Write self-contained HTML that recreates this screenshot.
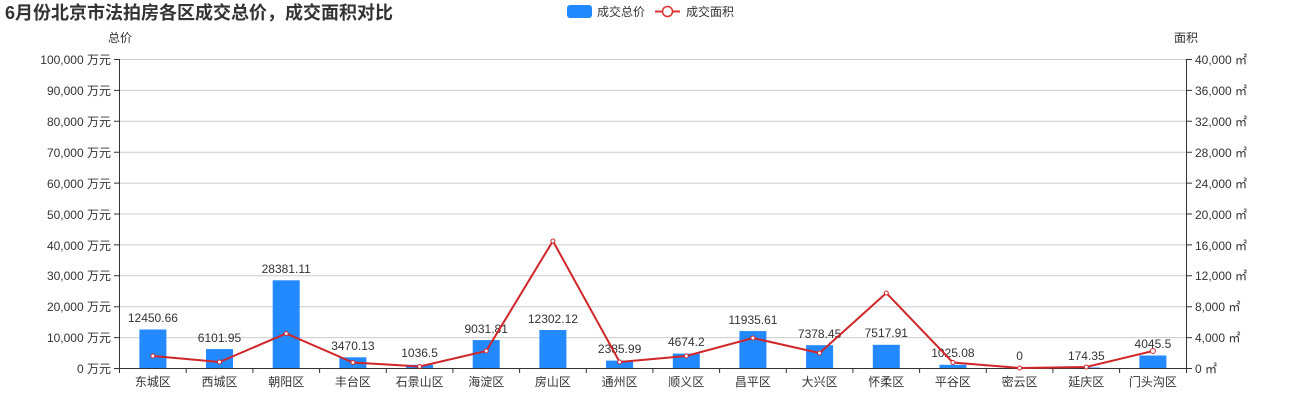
<!DOCTYPE html>
<html><head><meta charset="utf-8"><style>
html,body{margin:0;padding:0;background:#fff;width:1300px;height:400px;overflow:hidden}
svg{display:block;font-family:"Liberation Sans","Noto Sans CJK SC",sans-serif}
</style></head><body>
<svg width="1300" height="400" viewBox="0 0 1300 400">
<text x="5" y="19" font-size="18" font-weight="bold" fill="#333">6月份北京市法拍房各区成交总价，成交面积对比</text>
<!-- legend -->
<rect x="567" y="5" width="25" height="13" rx="3" fill="#2289ff"/>
<text x="597" y="16" font-size="12" fill="#333">成交总价</text>
<line x1="655" y1="11.5" x2="680" y2="11.5" stroke="#d33" stroke-width="2"/>
<circle cx="667.5" cy="11.5" r="5" fill="#fff" stroke="#d33" stroke-width="1.5"/>
<text x="686" y="16" font-size="12" fill="#333">成交面积</text>
<text x="108" y="42" font-size="12" fill="#333">总价</text>
<text x="1174" y="42" font-size="12" fill="#333">面积</text>
<g stroke="#ccc" stroke-width="1">
<line x1="119" x2="1186" y1="59.5" y2="59.5"/>
<line x1="119" x2="1186" y1="90.4" y2="90.4"/>
<line x1="119" x2="1186" y1="121.3" y2="121.3"/>
<line x1="119" x2="1186" y1="152.2" y2="152.2"/>
<line x1="119" x2="1186" y1="183.1" y2="183.1"/>
<line x1="119" x2="1186" y1="214" y2="214"/>
<line x1="119" x2="1186" y1="244.9" y2="244.9"/>
<line x1="119" x2="1186" y1="275.8" y2="275.8"/>
<line x1="119" x2="1186" y1="306.7" y2="306.7"/>
<line x1="119" x2="1186" y1="337.6" y2="337.6"/>
</g>
<g stroke="#333" stroke-width="1">
<line x1="119.5" y1="59" x2="119.5" y2="368"/>
<line x1="1186.5" y1="59" x2="1186.5" y2="368"/>
<line x1="119" y1="368.5" x2="1187" y2="368.5"/>
</g>
<g stroke="#333" stroke-width="1">
<path d="M114 59.5h5M114 90.4h5M114 121.3h5M114 152.2h5M114 183.1h5M114 214h5M114 244.9h5M114 275.8h5M114 306.7h5M114 337.6h5M114 368.5h5"/>
<path d="M1187 59.5h5M1187 90.4h5M1187 121.3h5M1187 152.2h5M1187 183.1h5M1187 214h5M1187 244.9h5M1187 275.8h5M1187 306.7h5M1187 337.6h5M1187 368.5h5"/>
<path d="M119.5 368v5M186.2 368v5M252.9 368v5M319.6 368v5M386.3 368v5M452.9 368v5M519.6 368v5M586.3 368v5M652.9 368v5M719.6 368v5M786.3 368v5M852.9 368v5M919.6 368v5M986.3 368v5M1052.9 368v5M1119.6 368v5M1186.5 368v5"/>
</g>
<g font-size="12" fill="#333" text-anchor="end">
<text x="111" y="64">100,000 万元</text>
<text x="111" y="95">90,000 万元</text>
<text x="111" y="126">80,000 万元</text>
<text x="111" y="157">70,000 万元</text>
<text x="111" y="188">60,000 万元</text>
<text x="111" y="219">50,000 万元</text>
<text x="111" y="250">40,000 万元</text>
<text x="111" y="280">30,000 万元</text>
<text x="111" y="311">20,000 万元</text>
<text x="111" y="342">10,000 万元</text>
<text x="111" y="373">0 万元</text>
</g>
<g font-size="12" fill="#333">
<text x="1195" y="64">40,000 ㎡</text>
<text x="1195" y="95">36,000 ㎡</text>
<text x="1195" y="126">32,000 ㎡</text>
<text x="1195" y="157">28,000 ㎡</text>
<text x="1195" y="188">24,000 ㎡</text>
<text x="1195" y="219">20,000 ㎡</text>
<text x="1195" y="250">16,000 ㎡</text>
<text x="1195" y="280">12,000 ㎡</text>
<text x="1195" y="311">8,000 ㎡</text>
<text x="1195" y="342">4,000 ㎡</text>
<text x="1195" y="373">0 ㎡</text>
</g>
<g fill="#2289ff">
<rect x="139.4" y="329.5" width="27" height="38.5"/>
<rect x="206" y="349.1" width="27" height="18.9"/>
<rect x="272.7" y="280.3" width="27" height="87.7"/>
<rect x="339.4" y="357.3" width="27" height="10.7"/>
<rect x="406.1" y="364.8" width="27" height="3.2"/>
<rect x="472.7" y="340.1" width="27" height="27.9"/>
<rect x="539.4" y="330" width="27" height="38"/>
<rect x="606.1" y="360.6" width="27" height="7.4"/>
<rect x="672.8" y="353.6" width="27" height="14.4"/>
<rect x="739.4" y="331.1" width="27" height="36.9"/>
<rect x="806.1" y="345.2" width="27" height="22.8"/>
<rect x="872.8" y="344.8" width="27" height="23.2"/>
<rect x="939.4" y="364.8" width="27" height="3.2"/>
<rect x="1072.8" y="367.5" width="27" height="0.5"/>
<rect x="1139.4" y="355.5" width="27" height="12.5"/>
</g>
<g font-size="12" fill="#333" text-anchor="middle">
<text x="152.9" y="322">12450.66</text>
<text x="219.5" y="342">6101.95</text>
<text x="286.2" y="273">28381.11</text>
<text x="352.9" y="350">3470.13</text>
<text x="419.6" y="357">1036.5</text>
<text x="486.2" y="333">9031.81</text>
<text x="552.9" y="323">12302.12</text>
<text x="619.6" y="353">2385.99</text>
<text x="686.3" y="346">4674.2</text>
<text x="752.9" y="324">11935.61</text>
<text x="819.6" y="338">7378.45</text>
<text x="886.3" y="337">7517.91</text>
<text x="952.9" y="357">1025.08</text>
<text x="1019.6" y="360">0</text>
<text x="1086.3" y="360">174.35</text>
<text x="1152.9" y="348">4045.5</text>
</g>
<polyline fill="none" stroke="#d0262a" stroke-width="2" points="152.9,356 219.5,362 286.2,333.5 352.9,362.5 419.6,366.5 486.2,351 552.9,241 619.6,362 686.3,356 752.9,338 819.6,353 886.3,293 952.9,362.5 1019.6,368 1086.3,367 1152.9,351"/>
<g fill="#fff" stroke="#d0262a" stroke-width="1">
<circle cx="152.9" cy="356" r="2"/><circle cx="219.5" cy="362" r="2"/><circle cx="286.2" cy="333.5" r="2"/><circle cx="352.9" cy="362.5" r="2"/><circle cx="419.6" cy="366.5" r="2"/><circle cx="486.2" cy="351" r="2"/><circle cx="552.9" cy="241" r="2"/><circle cx="619.6" cy="362" r="2"/><circle cx="686.3" cy="356" r="2"/><circle cx="752.9" cy="338" r="2"/><circle cx="819.6" cy="353" r="2"/><circle cx="886.3" cy="293" r="2"/><circle cx="952.9" cy="362.5" r="2"/><circle cx="1019.6" cy="368" r="2"/><circle cx="1086.3" cy="367" r="2"/><circle cx="1152.9" cy="351" r="2.5"/>
</g>
<g font-size="12" fill="#333" text-anchor="middle">
<text x="152.9" y="386">东城区</text><text x="219.5" y="386">西城区</text><text x="286.2" y="386">朝阳区</text><text x="352.9" y="386">丰台区</text><text x="419.6" y="386">石景山区</text><text x="486.2" y="386">海淀区</text><text x="552.9" y="386">房山区</text><text x="619.6" y="386">通州区</text><text x="686.3" y="386">顺义区</text><text x="752.9" y="386">昌平区</text><text x="819.6" y="386">大兴区</text><text x="886.3" y="386">怀柔区</text><text x="952.9" y="386">平谷区</text><text x="1019.6" y="386">密云区</text><text x="1086.3" y="386">延庆区</text><text x="1152.9" y="386">门头沟区</text>
</g>
</svg>
</body></html>
